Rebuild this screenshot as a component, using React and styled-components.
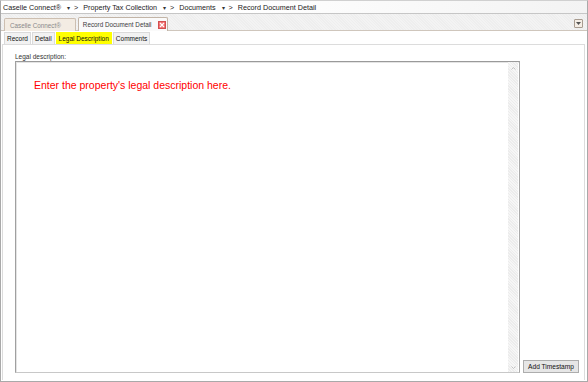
import React from 'react';
import styled, { createGlobalStyle } from 'styled-components';

const GlobalStyle = createGlobalStyle`
  html, body { margin: 0; padding: 0; background: #fff; }
  body { font-family: "Liberation Sans", Arial, sans-serif; }
`;

const crumbs = ['Caselle Connect®', 'Property Tax Collection', 'Documents', 'Record Document Detail'];
const subTabs = ['Record', 'Detail', 'Legal Description', 'Comments'];

const App = () => {
  return (
    <>
      <GlobalStyle />
      <Frame>
        <Breadcrumb>
          {crumbs.map((c, i) => (
            <Crumb key={c}>
              <span>{c}</span>
              {i < crumbs.length - 1 && (
                <>
                  <Caret>▾</Caret>
                  <Sep>&gt;</Sep>
                </>
              )}
            </Crumb>
          ))}
        </Breadcrumb>

        <DocTabStrip>
          <DocTab>Caselle Connect®</DocTab>
          <DocTab $active>
            Record Document Detail
            <CloseBox>
              <svg width="6" height="6" viewBox="0 0 6 6">
                <path d="M1 1L5 5M5 1L1 5" stroke="#fff" strokeWidth="1.2" />
              </svg>
            </CloseBox>
          </DocTab>
          <ListButton>
            <svg width="5" height="3" viewBox="0 0 5 3">
              <path d="M0 0H5L2.5 3Z" fill="#555" />
            </svg>
          </ListButton>
        </DocTabStrip>

        <SubTabBar>
          {subTabs.map(t => (
            <SubTab key={t} $highlight={t === 'Legal Description'}>{t}</SubTab>
          ))}
        </SubTabBar>

        <Panel>
          <FieldLabel>Legal description:</FieldLabel>
          <Body>
            <TextBox>
              <Placeholder>Enter the property's legal description here.</Placeholder>
              <ScrollBar>
                <ScrollArrow>
                  <svg width="5" height="3" viewBox="0 0 5 3">
                    <path d="M0.5 2.5L2.5 0.5L4.5 2.5" stroke="#b8b8b8" fill="none" strokeWidth="0.8" />
                  </svg>
                </ScrollArrow>
                <ScrollArrow>
                  <svg width="5" height="3" viewBox="0 0 5 3">
                    <path d="M0.5 0.5L2.5 2.5L4.5 0.5" stroke="#b8b8b8" fill="none" strokeWidth="0.8" />
                  </svg>
                </ScrollArrow>
              </ScrollBar>
            </TextBox>
            <SideColumn>
              <Button>Add Timestamp</Button>
            </SideColumn>
          </Body>
        </Panel>
      </Frame>
    </>
  );
};

const Frame = styled.div`
  width: 588px;
  height: 382px;
  box-sizing: border-box;
  border: 1px solid #a9a9a9;
  border-top-color: #d0d0d0;
  display: flex;
  flex-direction: column;
  font-size: 7px;
  color: #111;
  overflow: hidden;
`;

const Breadcrumb = styled.div`
  height: 12px;
  flex: none;
  display: flex;
  align-items: center;
  padding-left: 2px;
  background: linear-gradient(to right, #ffffff 0%, #ffffff 40%, #f3f3f3 100%);
  border-bottom: 1px solid #c6c6c6;
  font-size: 7.2px;
  color: #1a1a1a;
`;

const Crumb = styled.div`
  display: flex;
  align-items: center;
  white-space: nowrap;
`;

const Caret = styled.span`
  margin-left: 6px;
  font-size: 6px;
  color: #333;
`;

const Sep = styled.span`
  margin: 0 5px 0 4px;
`;

const DocTabStrip = styled.div`
  height: 16px;
  flex: none;
  display: flex;
  align-items: flex-end;
  gap: 2px;
  padding: 0 2px 0 3px;
  background: repeating-linear-gradient(45deg, #eeeeee 0 1px, #f3f3f3 1px 2px);
  border-bottom: 1px solid #cfc6bc;
`;

const DocTab = styled.div`
  height: ${p => (p.$active ? '14px' : '13px')};
  box-sizing: border-box;
  display: flex;
  align-items: center;
  gap: 7px;
  padding: 0 ${p => (p.$active ? '1px' : '14px')} 0 ${p => (p.$active ? '4px' : '5px')};
  border: 1px solid ${p => (p.$active ? '#c2b4a6' : '#cdbfb1')};
  border-bottom: none;
  border-radius: 2px 2px 0 0;
  background: ${p => (p.$active ? '#fafafa' : '#f3ece3')};
  color: ${p => (p.$active ? '#3a3a3a' : '#8a8a8a')};
  font-size: 6.3px;
  white-space: nowrap;
  margin-bottom: -1px;
`;

const CloseBox = styled.span`
  width: 8px;
  height: 8px;
  box-sizing: border-box;
  display: flex;
  align-items: center;
  justify-content: center;
  background: #f26f6f;
  border: 1px solid #d25050;
`;

const ListButton = styled.div`
  margin-left: auto;
  align-self: center;
  width: 9px;
  height: 9px;
  box-sizing: border-box;
  border: 1px solid #a89c90;
  border-radius: 1px;
  background: #f5eee6;
  display: flex;
  align-items: center;
  justify-content: center;
  margin-right: 2px;
  margin-top: 2px;
`;

const SubTabBar = styled.div`
  height: 13px;
  flex: none;
  display: flex;
  align-items: flex-end;
  gap: 1px;
  padding: 0 0 0 3px;
`;

const SubTab = styled.div`
  height: 12px;
  box-sizing: border-box;
  display: flex;
  align-items: center;
  padding: 0 2px;
  border: 1px solid ${p => (p.$highlight ? '#ffff00' : '#dadada')};
  border-bottom: none;
  background: ${p => (p.$highlight ? '#ffff00' : '#f2f2f2')};
  color: #111;
  font-size: 6.5px;
  white-space: nowrap;
`;

const Panel = styled.div`
  flex: 1;
  display: flex;
  flex-direction: column;
  margin: 0 2px 1px 1px;
  padding: 8px 0 7px 12px;
  border: 1px solid #dcdcdc;
  border-bottom: none;
  background: #fff;
`;

const FieldLabel = styled.div`
  height: 8px;
  line-height: 8px;
  font-size: 6.5px;
  color: #333;
`;

const Body = styled.div`
  flex: 1;
  display: flex;
  min-height: 0;
`;

const TextBox = styled.div`
  flex: none;
  width: 505px;
  box-sizing: border-box;
  border: 1px solid #a0a0a0;
  border-top-color: #9a9a9a;
  border-right-color: #a8a8a8;
  border-bottom-color: #c8c8c8;
  box-shadow: inset 1px 1px 0 #e4e4e4;
  display: flex;
`;

const Placeholder = styled.div`
  flex: 1;
  padding: 17px 0 0 18px;
  font-size: 10.5px;
  color: #ff0000;
`;

const ScrollBar = styled.div`
  width: 10px;
  display: flex;
  flex-direction: column;
  justify-content: space-between;
  align-items: center;
  padding: 3px 0 2px;
  margin-right: 1px;
  background: repeating-linear-gradient(45deg, #ececec 0 1px, #f6f6f6 1px 2px);
`;

const ScrollArrow = styled.div`
  height: 6px;
  display: flex;
  align-items: center;
`;

const SideColumn = styled.div`
  flex: 1;
  display: flex;
  flex-direction: column;
  justify-content: flex-end;
  padding-left: 3px;
`;

const Button = styled.div`
  width: 56px;
  height: 13px;
  box-sizing: border-box;
  border: 1px solid #adadad;
  background: #e6e6e6;
  display: flex;
  align-items: center;
  justify-content: center;
  font-size: 6.6px;
  color: #111;
  white-space: nowrap;
`;

export default App;
